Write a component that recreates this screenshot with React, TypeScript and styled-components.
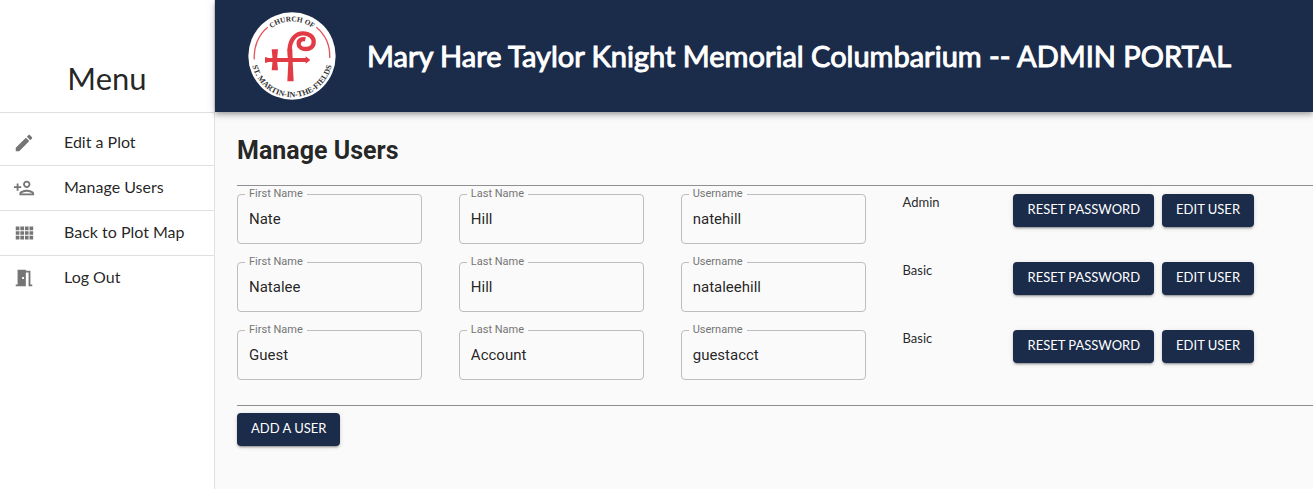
import React, { useId } from "react";
import styled, { createGlobalStyle } from "styled-components";

const navy = "#1b2b4a";

const GlobalStyle = createGlobalStyle`
  *, *::before, *::after { box-sizing: border-box; }
  body {
    margin: 0;
    background: #fafafa;
    color: rgba(0, 0, 0, 0.87);
    font-family: Lato, sans-serif;
  }
`;

const Page = styled.div`
  display: flex;
  min-height: 100vh;
  overflow-x: hidden;
`;

const Sidebar = styled.aside`
  flex: 0 0 215px;
  background: #fff;
  border-right: 1px solid #e0e0e0;
`;

const SidebarHeader = styled.div`
  display: flex;
  align-items: flex-end;
  justify-content: center;
  height: 113px;
  padding-bottom: 15px;
  border-bottom: 1px solid #e0e0e0;
`;

const SidebarTitle = styled.h2`
  margin: 0;
  font-size: 31px;
  font-weight: 400;
  line-height: 38px;
`;

const MenuList = styled.ul`
  margin: 0;
  padding: 8px 0;
  list-style: none;
`;

const MenuItem = styled.li`
  & + & { border-top: 1px solid #e0e0e0; }
`;

const MenuLink = styled.a`
  display: flex;
  align-items: center;
  height: 44px;
  padding: 0 13px;
  gap: 29px;
  color: inherit;
  font-size: 16px;
  line-height: 22px;
  text-decoration: none;
`;

const MenuText = styled.span`
  padding-bottom: 2px;
`;

const MenuIcon = styled.svg`
  width: 22px;
  height: 22px;
  fill: #757575;
`;

const Content = styled.div`
  flex: 1;
  min-width: 0;
`;

const Banner = styled.header`
  display: flex;
  align-items: center;
  gap: 31px;
  min-height: 112px;
  padding: 0 33px;
  background: ${navy};
  color: #fff;
  box-shadow: 0 2px 4px -1px rgba(0, 0, 0, 0.2), 0 4px 5px rgba(0, 0, 0, 0.14),
    0 1px 10px rgba(0, 0, 0, 0.12);
`;

const BannerTitle = styled.h1`
  margin: 0;
  font-size: 29px;
  font-weight: 400;
  line-height: 38px;
  -webkit-text-stroke: 1px #fff;
`;

const Logo = styled.svg`
  flex: none;
  width: 88px;
  height: 88px;
`;

const Main = styled.main`
  padding: 22px 0 22px 22px;
`;

const Heading = styled.h2`
  margin: 0 0 17px;
  font-family: Roboto, sans-serif;
  font-size: 25px;
  font-weight: 700;
  line-height: 34px;
`;

const Rule = styled.hr`
  margin: 0;
  border: 0;
  border-top: 1px solid #8f8f8f;
`;

const UserList = styled.div`
  display: grid;
  gap: 18px;
  padding: 8px 0 25px;
`;

const UserRow = styled.form`
  display: grid;
  grid-template-columns: repeat(3, minmax(0, 20fr)) minmax(0, 10fr) minmax(244px, 27fr);
  align-items: start;
`;

const Field = styled.div`
  position: relative;
  margin-right: 37px;
  font-family: Roboto, sans-serif;
`;

const FieldLabel = styled.label`
  position: absolute;
  top: -7px;
  left: 8px;
  padding: 0 4px;
  background: #fafafa;
  color: #757575;
  font-size: 11px;
  line-height: 14px;
`;

const FieldInput = styled.input`
  display: block;
  width: 100%;
  height: 50px;
  padding: 0 11px;
  border: 1px solid #bdbdbd;
  border-radius: 4px;
  background: transparent;
  color: inherit;
  font: 15px/18px Roboto, sans-serif;
`;

const Role = styled.span`
  font-size: 13px;
  line-height: 16px;
`;

const Actions = styled.div`
  display: flex;
  gap: 8px;
`;

const Button = styled.button`
  height: 33px;
  padding: 0 14px 3px;
  border: 0;
  border-radius: 4px;
  background: ${navy};
  color: #fff;
  font: 13px/22px Lato, sans-serif;
  text-transform: uppercase;
  white-space: nowrap;
  cursor: pointer;
  box-shadow: 0 3px 1px -2px rgba(0, 0, 0, 0.2), 0 2px 2px rgba(0, 0, 0, 0.14),
    0 1px 5px rgba(0, 0, 0, 0.12);
`;

const Footer = styled.div`
  padding-top: 7px;
`;

const menu = [
  {
    label: "Edit a Plot",
    icon: "M3 17.25V21h3.75L17.81 9.94l-3.75-3.75L3 17.25zM20.71 7.04c.39-.39.39-1.02 0-1.41l-2.34-2.34c-.39-.39-1.02-.39-1.41 0l-1.83 1.83 3.75 3.75 1.83-1.83z",
  },
  {
    label: "Manage Users",
    icon: "M15 12c2.21 0 4-1.79 4-4s-1.79-4-4-4-4 1.79-4 4 1.79 4 4 4zm0-6c1.1 0 2 .9 2 2s-.9 2-2 2-2-.9-2-2 .9-2 2-2zm0 8c-2.67 0-8 1.34-8 4v2h16v-2c0-2.66-5.33-4-8-4zm-6 4c.22-.72 3.31-2 6-2 2.7 0 5.8 1.29 6 2H9zm-3-3v-3h3v-2H6V7H4v3H1v2h3v3z",
  },
  {
    label: "Back to Plot Map",
    icon: "M3 9h4V5H3v4zm0 5h4v-4H3v4zm5 0h4v-4H8v4zm5 0h4v-4h-4v4zM8 9h4V5H8v4zm5-4v4h4V5h-4zm5 9h4v-4h-4v4zM3 19h4v-4H3v4zm5 0h4v-4H8v4zm5 0h4v-4h-4v4zm5 0h4v-4h-4v4zm0-14v4h4V5h-4z",
  },
  {
    label: "Log Out",
    icon: "M14 6v15H3v-2h2V3h9v1h5v15h2v2h-4V6h-3zm-4 5v2h2v-2h-2z",
  },
];

const users = [
  { first: "Nate", last: "Hill", username: "natehill", role: "Admin" },
  { first: "Natalee", last: "Hill", username: "nataleehill", role: "Basic" },
  { first: "Guest", last: "Account", username: "guestacct", role: "Basic" },
];

function ChurchLogo() {
  return (
    <Logo viewBox="0 0 264 264" role="img" aria-label="Church of St. Martin-in-the-Fields">
      <defs>
        <path id="logo-top" d="M28 132a104 104 0 0 1 208 0" />
        <path id="logo-bottom" d="M11 118a122 122 0 1 0 242 0" />
      </defs>
      <circle cx="132" cy="132" r="131" fill="#fff" />
      <g fill="none" stroke="#e2555c" strokeWidth="4">
        <path d="M59 46A113 113 0 0 0 19 142" />
        <path d="M205 46A113 113 0 0 1 245 138" />
      </g>
      <g fill="#333" fontFamily="'Liberation Serif', serif" fontWeight="700" textAnchor="middle">
        <text fontSize="22">
          <textPath href="#logo-top" startOffset="50%">CHURCH OF</textPath>
        </text>
        <text fontSize="24">
          <textPath href="#logo-bottom" startOffset="50%">ST. MARTIN-IN-THE-FIELDS</textPath>
        </text>
      </g>
      <path
        d="M127 150C126 140 125 125 125 112C126 84 142 64 165 64C184 64 197 75 197 90C197 104 186 111 174 111C161 111 152 104 152 95C152 85 161 79 172 82"
        fill="none"
        stroke="#e23b45"
        strokeWidth="13"
      />
      <g fill="#e23b45">
        <path d="M118 110H133L134 150L137 208H118L121 150Z" />
        <path d="M51 135L62 138H173V133L187 144L173 155V150H62L51 153Z" />
        <path d="M71 112H90L87 144L90 175H71L74 144Z" />
      </g>
    </Logo>
  );
}

function TextField({ label, value }: { label: string; value: string }) {
  const id = useId();
  return (
    <Field>
      <FieldInput id={id} type="text" defaultValue={value} />
      <FieldLabel htmlFor={id}>{label}</FieldLabel>
    </Field>
  );
}

export default function App() {
  return (
    <Page>
      <GlobalStyle />
      <Sidebar>
        <SidebarHeader>
          <SidebarTitle>Menu</SidebarTitle>
        </SidebarHeader>
        <nav aria-label="Menu">
          <MenuList>
            {menu.map((item) => (
              <MenuItem key={item.label}>
                <MenuLink href="#">
                  <MenuIcon viewBox="0 0 24 24" aria-hidden="true">
                    <path d={item.icon} />
                  </MenuIcon>
                  <MenuText>{item.label}</MenuText>
                </MenuLink>
              </MenuItem>
            ))}
          </MenuList>
        </nav>
      </Sidebar>
      <Content>
        <Banner>
          <ChurchLogo />
          <BannerTitle>Mary Hare Taylor Knight Memorial Columbarium -- ADMIN PORTAL</BannerTitle>
        </Banner>
        <Main>
          <Heading>Manage Users</Heading>
          <Rule />
          <UserList>
            {users.map((user) => (
              <UserRow key={user.username}>
                <TextField label="First Name" value={user.first} />
                <TextField label="Last Name" value={user.last} />
                <TextField label="Username" value={user.username} />
                <Role>{user.role}</Role>
                <Actions>
                  <Button type="button">Reset Password</Button>
                  <Button type="button">Edit User</Button>
                </Actions>
              </UserRow>
            ))}
          </UserList>
          <Rule />
          <Footer>
            <Button type="button">Add a User</Button>
          </Footer>
        </Main>
      </Content>
    </Page>
  );
}
